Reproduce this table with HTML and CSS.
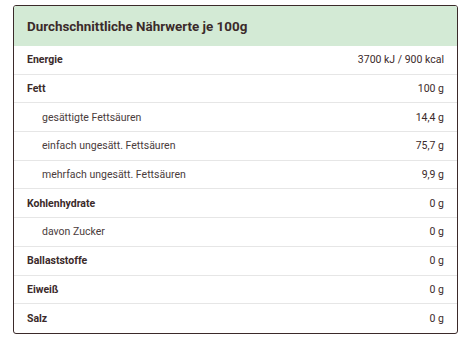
FILE: index.html
```html
<!DOCTYPE html>
<html lang="de">
<head>
<meta charset="utf-8">
<link rel="stylesheet" href="styles.css">
</head>
<body>
<div class="card">
  <div class="head">Durchschnittliche Nährwerte je 100g</div>
  <div class="row main"><span>Energie</span><span class="val">3700 kJ / 900 kcal</span></div>
  <div class="row main"><span>Fett</span><span class="val">100 g</span></div>
  <div class="row sub"><span>gesättigte Fettsäuren</span><span class="val">14,4 g</span></div>
  <div class="row sub"><span>einfach ungesätt. Fettsäuren</span><span class="val">75,7 g</span></div>
  <div class="row sub"><span>mehrfach ungesätt. Fettsäuren</span><span class="val">9,9 g</span></div>
  <div class="row main"><span>Kohlenhydrate</span><span class="val">0 g</span></div>
  <div class="row sub"><span>davon Zucker</span><span class="val">0 g</span></div>
  <div class="row main"><span>Ballaststoffe</span><span class="val">0 g</span></div>
  <div class="row main"><span>Eiweiß</span><span class="val">0 g</span></div>
  <div class="row main last"><span>Salz</span><span class="val">0 g</span></div>
</div>
</body>
</html>
```
FILE: styles.css
```css
html, body { margin: 0; padding: 0; background: #fff; }
body { padding: 5px 8px 0 13px; font-family: "Roboto", "Liberation Sans", sans-serif; color: #3b2a2a; }
.card {
  width: 445px;
  box-sizing: border-box;
  border: 1px solid #3b2a2a;
  border-radius: 3px;
  overflow: hidden;
}
.head {
  background: #d3ead5;
  height: 40px;
  box-sizing: border-box;
  padding: 0 13px;
  display: flex;
  align-items: center;
  font-weight: 700;
  font-size: 13.4px;
}
.row {
  height: 28.7px;
  box-sizing: border-box;
  border-bottom: 1px solid #e6e6e6;
  display: flex;
  align-items: center;
  justify-content: space-between;
  padding: 0 13px;
  font-size: 10.5px;
}
.row.last { border-bottom: none; }
.main span:first-child { font-weight: 700; }
.sub span:first-child { padding-left: 15px; color: #4a3c3c; }
.val { color: #3b2a2a; }
```
